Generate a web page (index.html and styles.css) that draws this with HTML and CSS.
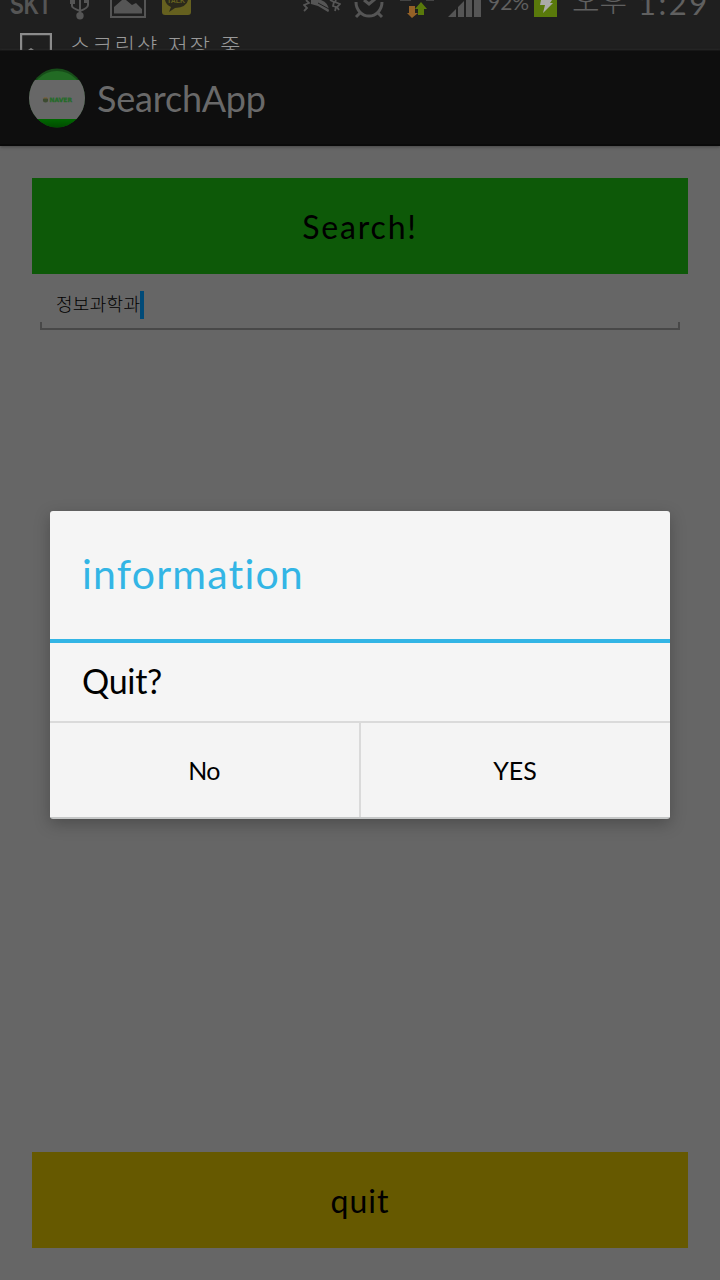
FILE: index.html
```
<!DOCTYPE html>
<html lang="ko">
<head>
<meta charset="utf-8">
<title>SearchApp</title>
<link rel="stylesheet" href="styles.css">
</head>
<body>
<div class="screen">
  <div class="status">
    <div class="status-row">
      <span class="carrier">SKT</span>
      <svg class="usb" width="20" height="20" viewBox="0 0 20 20"><path d="M2 4v2q0 2 8 5M18 2v3q0 3-8 6M10 0v15" fill="none" stroke="#555" stroke-width="2"/><path d="M0 0h5v4H0zM14 0h5v3h-5z" fill="#555"/><circle cx="10" cy="15.700" r="3.700" fill="#555"/></svg>
      <svg class="photo" width="36" height="19" viewBox="0 0 36 19"><path d="M1 0v17h34V0" fill="none" stroke="#555" stroke-width="2"/><path d="M4 13.500V7L12 0h4l6 5 4-2 6 6v4.500z" fill="#555"/></svg>
      <svg class="talk" width="29" height="16" viewBox="0 0 29 16"><path d="M0 0h29v12q0 3-3 3H3q-3 0-3-3z" fill="#65601f"/><path d="M3 0h23q-1 7-13 8l-6 4 2-5Q4 5 3 0z" fill="#2b291b"/><text x="5" y="3" class="talk-text">TALK</text></svg>
      <svg class="vibrate" width="38" height="14" viewBox="0 0 38 14"><path d="M8 4V0h10q8 3 8 11l-1 1-10-6z" fill="#555"/><path d="M15 3l11 6" stroke="#1f1f1f" stroke-width="1"/><path d="M3 0l3 3-5 2 3 3-3 3M27 0l4 2-1 4 3 1-1 4M33 0l-1 2 5 2-3 3 2 3" fill="none" stroke="#555" stroke-width="1.800"/></svg>
      <svg class="alarm" width="30" height="19" viewBox="0 0 30 19"><path d="M2 0a13 14 0 0 0 26 0" transform="translate(0 2)" fill="none" stroke="#555" stroke-width="3"/><path d="M10 0l5 4 6-5M6 13l-4 4M24 13l4 4" fill="none" stroke="#555" stroke-width="3"/></svg>
      <svg class="data" width="34" height="19" viewBox="0 0 34 19"><path d="M0 0h11M26 0h8" stroke="#444" stroke-width="2"/><path d="M9 6h6v7h3l-6 5-5-5h2z" fill="#946127"/><path d="M18 15V9h-3l6-7 6 7h-3v6z" fill="#59790b"/></svg>
      <svg class="signal" width="33" height="17" viewBox="0 0 33 17"><path d="M0 17L8 9v8zM10 17V7l6-6v16zM18 0h6v17h-6zM26 0h7v17h-7z" fill="#555"/></svg>
      <span class="percent">92%</span>
      <svg class="battery" width="23" height="17" viewBox="0 0 23 17"><path d="M0 0h23v17H0z" fill="#59790b"/><path d="M7 0h11l-2 3h3L9 13l2-8H6z" fill="#aaa"/></svg>
      <span class="ampm">오후</span>
      <span class="clock">1:29</span>
    </div>
    <div class="ticker">
      <svg width="32" height="17" viewBox="0 0 32 17"><path d="M1 17V1h30v16" fill="none" stroke="#8b8b8b" stroke-width="2.400"/><path d="M8 17l3-2 3 2z" fill="#8b8b8b"/></svg>
      <span class="ticker-text">스크린샷 저장 중</span>
    </div>
  </div>
  <header class="bar">
    <svg class="logo" width="58" height="60" viewBox="0 0 58 60">
      <defs>
        <clipPath id="round"><ellipse cx="29" cy="30" rx="28" ry="29.500"/></clipPath>
        <linearGradient id="base" x1="0" y1="0" x2="0" y2="1"><stop offset="0" stop-color="#006800"/><stop offset="1" stop-color="#004900"/></linearGradient>
      </defs>
      <g clip-path="url(#round)">
        <path d="M0 0h58v60H0z" fill="#174d19"/>
        <ellipse cx="29" cy="30" rx="27" ry="27" fill="#226b24"/>
        <path d="M0 12h58v39H0z" fill="#676767"/>
        <path d="M0 51h58v9H0z" fill="url(#base)"/>
      </g>
      <ellipse cx="17.500" cy="32" rx="2.600" ry="2.500" fill="#3d4b31"/><path d="M14.500 30.500q3-3 6 0z" fill="#7b6241"/>
      <text x="21.500" y="34.300" class="logo-text" textLength="22.500" lengthAdjust="spacingAndGlyphs">NAVER</text>
    </svg>
    <h1 class="title">SearchApp</h1>
  </header>
  <main class="content">
    <button class="btn search"><span class="search-label">Search!</span></button>
    <div class="field"><span class="query">정보과학과</span><span class="caret"></span></div>
    <button class="btn quit"><span class="quit-label">quit</span></button>
  </main>
  <section class="dialog">
    <h2 class="dialog-title"><span>information</span></h2>
    <p class="message"><span>Quit?</span></p>
    <div class="actions"><button class="action no"><span>No</span></button><button class="action yes"><span>YES</span></button></div>
  </section>
</div>
</body>
</html>
```
FILE: styles.css
```
* { box-sizing: border-box; }
body { margin: 0; font-family: Lato, "Noto Sans CJK KR", sans-serif; }
button { border: 0; padding: 0; margin: 0; font-family: inherit; color: #000; }
svg { display: block; flex: none; }
span { white-space: nowrap; }
.screen { position: relative; width: 720px; height: 1280px; overflow: hidden; display: flex; flex-direction: column; background: #666; }
.status { height: 50px; flex: none; overflow: hidden; background: #1f1f1f; color: #606060; }
.status-row { display: flex; align-items: flex-start; height: 33px; padding-left: 10px; }
.status-row span { display: block; flex: none; line-height: 30px; }
.carrier { width: 60px; margin-top: -10px; font-family: "Liberation Sans", sans-serif; font-size: 28px; font-weight: bold; color: #555; transform: scaleX(.74); transform-origin: left; }
.usb { margin-right: 20px; }
.photo { margin-right: 16px; }
.talk { margin-right: 112px; }
.talk-text { font: bold 7px "Liberation Sans", sans-serif; fill: #65601f; }
.vibrate { margin-right: 13px; }
.alarm { margin-right: 16px; }
.data { margin-right: 14px; }
.signal { margin-right: 7px; }
.percent { width: 46px; margin-top: -13px; font-size: 21px; }
.battery { margin-right: 15px; }
.ampm { width: 66px; margin-top: -16px; font-size: 30px; font-weight: 300; }
.clock { margin-top: -12px; font-size: 31px; letter-spacing: 2.5px; }
.ticker { display: flex; align-items: flex-start; height: 17px; padding-left: 20px; }
.ticker-text { margin: 0 0 0 18px; font-size: 22px; line-height: 26px; letter-spacing: 2.1px; color: #999; font-weight: 300; }
.bar { height: 96px; flex: none; display: flex; align-items: center; gap: 11px; padding-left: 28px; background: #0e0e0e; border-top: 1px solid #171717; border-bottom: 2px solid #090909; box-shadow: 0 1px 3px #444; }
.logo-text { font: bold 6px "DejaVu Sans", sans-serif; fill: #246b29; stroke: #246b29; stroke-width: .3px; }
.title { margin: 0; font-size: 36px; font-weight: 400; line-height: 44px; letter-spacing: -.2px; color: #696969; }
.content { flex: 1; display: flex; flex-direction: column; padding: 32px; }
.btn { height: 96px; flex: none; font-size: 32px; }
.search { background: #0d5908; }
.quit { margin-top: auto; background: #665900; }
.search-label { letter-spacing: 1.8px; }
.quit-label { letter-spacing: 1px; }
.field { height: 48px; margin: 8px 8px 0; padding: 9px 0 0 16px; display: flex; background: linear-gradient(#484848, #484848) 0 100% / 100% 2px no-repeat, linear-gradient(#484848, #484848) 0 100% / 2px 8px no-repeat, linear-gradient(#484848, #484848) 100% 100% / 2px 8px no-repeat; }
.query { width: 84px; font-size: 18px; font-weight: 300; line-height: 26px; letter-spacing: .3px; }
.caret { width: 4px; height: 28px; background: #004a78; }
.dialog { position: absolute; left: 50px; top: 511px; width: 620px; height: 308px; display: flex; flex-direction: column; background: #f5f5f5; border-radius: 3px; border-bottom: 2px solid #c5c7c7; box-shadow: 0 5px 16px rgba(0,0,0,.25); }
.dialog-title { height: 132px; flex: none; margin: 0; padding: 0 32px; border-bottom: 4px solid #33b5e5; color: #33b5e5; font-size: 41px; font-weight: 400; line-height: 126px; letter-spacing: 1.2px; }
.message { height: 78px; flex: none; margin: 0; padding: 0 32px; font-size: 34px; line-height: 76px; letter-spacing: -.3px; }
.actions { flex: 1; display: flex; border-top: 2px solid #dadada; }
.action { flex: 1; background: #f4f4f4; font-size: 25px; }
.no { flex: none; width: 311px; border-right: 2px solid #dadada; padding-right: 1px; letter-spacing: -.8px; }
.yes { padding-right: 1px; }
```
